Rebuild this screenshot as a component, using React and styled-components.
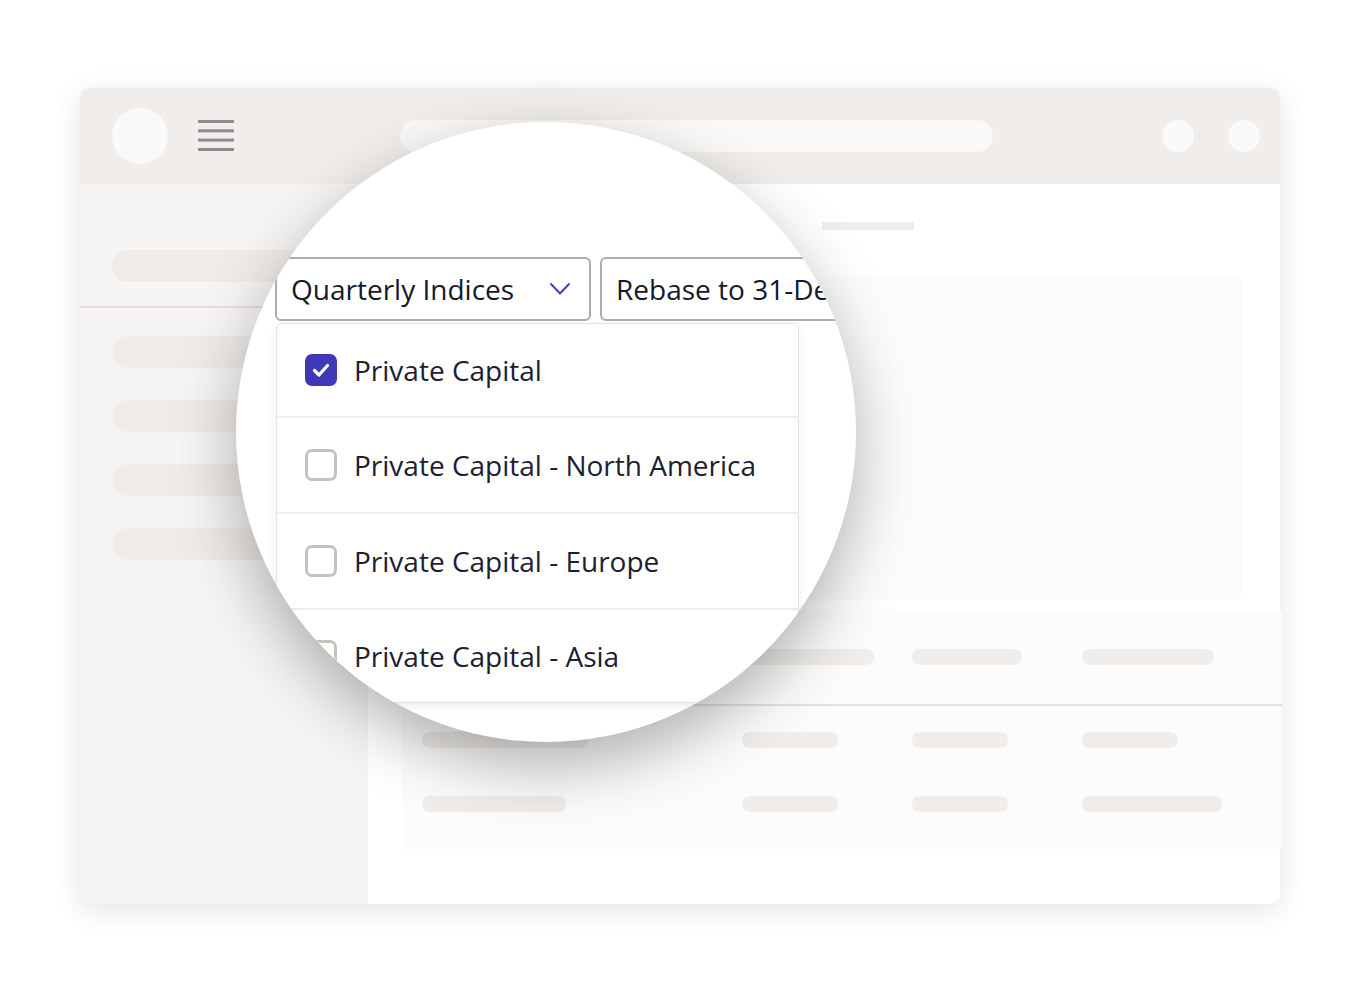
import React from "react";
import styled, { createGlobalStyle } from "styled-components";

const GlobalStyle = createGlobalStyle`
    html, body {
        margin: 0;
        padding: 0;
        background: #ffffff;
    }
    body {
        font-family: "Open Sans", "Noto Sans", sans-serif;
    }
`;

const Page = styled.div`
    width: 1360px;
    height: 992px;
    box-sizing: border-box;
    padding: 88px 80px;
`;

const Window = styled.div`
    position: relative;
    width: 1200px;
    height: 816px;
    border-radius: 10px;
    background: #ffffff;
    box-shadow: 0 6px 28px rgba(0, 0, 0, 0.11);
    display: grid;
    grid-template-rows: 96px 1fr;
    grid-template-columns: 288px 1fr;
`;

const TopBar = styled.header`
    grid-column: 1 / -1;
    display: flex;
    align-items: center;
    padding: 0 20px 0 32px;
    background: #f0edea;
    border-radius: 10px 10px 0 0;
`;

const Logo = styled.div`
    width: 56px;
    height: 56px;
    border-radius: 50%;
    background: #fafafa;
    flex-shrink: 0;
`;

const Burger = styled.svg`
    margin-left: 30px;
    flex-shrink: 0;
`;

const Search = styled.div`
    margin-left: 166px;
    width: 593px;
    height: 32px;
    border-radius: 16px;
    background: #faf9f8;
`;

const TopActions = styled.div`
    margin-left: auto;
    display: flex;
    gap: 34px;
`;

const Dot = styled.div`
    width: 32px;
    height: 32px;
    border-radius: 50%;
    background: #fafafa;
`;

const Sidebar = styled.aside`
    background: #f6f5f3;
    border-radius: 0 0 0 10px;
    display: flex;
    flex-direction: column;
`;

const SideTop = styled.div`
    padding: 66px 32px 24px;
    border-bottom: 2px solid #e4e0dc;
`;

const SideList = styled.div`
    padding: 28px 32px 0;
    display: flex;
    flex-direction: column;
    gap: 32px;
`;

const Pill = styled.div`
    width: ${(p) => p.$w}px;
    height: ${(p) => p.$h || 16}px;
    border-radius: ${(p) => (p.$h || 16) / 2}px;
    background: ${(p) => p.$bg || "#f0edea"};
`;

const Main = styled.main`
    padding: 38px 38px 0 34px;
    display: flex;
    flex-direction: column;
`;

const TitleBar = styled.div`
    margin-left: 420px;
    width: 92px;
    height: 8px;
    background: #f0edea;
`;

const ChartPanel = styled.div`
    margin-top: 46px;
    height: 324px;
    border-radius: 6px;
    background: #fcfcfc;
`;

const TablePanel = styled.div`
    margin-top: 10px;
    margin-right: -40px;
    height: 240px;
    border-radius: 6px;
    background: #fcfcfc;
`;

const TableHead = styled.div`
    height: 94px;
    border-bottom: 2px solid #e4e0dc;
    display: grid;
    grid-template-columns: 320px 170px 170px 1fr;
    align-items: center;
    padding-left: 20px;
`;

const TableBody = styled.div`
    padding: 26px 0 0 20px;
    display: flex;
    flex-direction: column;
    gap: 48px;
`;

const TableRow = styled.div`
    display: grid;
    grid-template-columns: 320px 170px 170px 1fr;
`;

const Lens = styled.div`
    position: absolute;
    left: 156px;
    top: 34px;
    width: 620px;
    height: 620px;
    box-sizing: border-box;
    padding: 135px 0 0 39px;
    border-radius: 50%;
    overflow: hidden;
    background: #ffffff;
    box-shadow: 0 24px 64px rgba(0, 0, 0, 0.3);
    z-index: 5;
`;

const Toolbar = styled.div`
    display: flex;
    gap: 9px;
`;

const Select = styled.div`
    flex-shrink: 0;
    width: ${(p) => p.$w}px;
    height: 64px;
    box-sizing: border-box;
    border: 2px solid #b1aba5;
    border-radius: 6px;
    padding: 0 18px 0 14px;
    display: flex;
    align-items: center;
    justify-content: space-between;
    font-size: 28px;
    color: #141a2c;
    white-space: nowrap;
`;

const Menu = styled.div`
    margin: 2px 0 0 1px;
    width: 523px;
    box-sizing: border-box;
    border: 1px solid #e6e2de;
    border-radius: 6px;
    background: #ffffff;
    box-shadow: 0 3px 10px rgba(0, 0, 0, 0.08);
`;

const Option = styled.div`
    box-sizing: border-box;
    height: 96px;
    padding-left: 28px;
    display: flex;
    align-items: center;
    gap: 17px;
    border-bottom: 2px solid #efebe7;
    &:first-child {
        height: 94px;
    }
    &:last-child {
        height: 92px;
        border-bottom: none;
    }
`;

const Box = styled.div`
    width: 32px;
    height: 32px;
    box-sizing: border-box;
    border-radius: 7px;
    flex-shrink: 0;
    display: flex;
    align-items: center;
    justify-content: center;
    background: ${(p) => (p.$on ? "#3e39b6" : "#ffffff")};
    border: ${(p) => (p.$on ? "none" : "3px solid #c8c2bc")};
`;

const Label = styled.span`
    font-size: 28px;
    color: #1b2033;
    white-space: nowrap;
`;

const options = [
    { label: "Private Capital", on: true },
    { label: "Private Capital - North America", on: false },
    { label: "Private Capital - Europe", on: false },
    { label: "Private Capital - Asia", on: false },
];

const App = () => {
    return (
        <>
            <GlobalStyle />
            <Page>
                <Window>
                    <TopBar>
                        <Logo />
                        <Burger width="36" height="32" viewBox="0 0 36 32">
                            <rect x="0" y="0" width="36" height="3" fill="#8d8b90" />
                            <rect x="0" y="9.3" width="36" height="3" fill="#8d8b90" />
                            <rect x="0" y="18.6" width="36" height="3" fill="#8d8b90" />
                            <rect x="0" y="28" width="36" height="3" fill="#8d8b90" />
                        </Burger>
                        <Search />
                        <TopActions>
                            <Dot />
                            <Dot />
                        </TopActions>
                    </TopBar>
                    <Sidebar>
                        <SideTop>
                            <Pill $w={224} $h={32} $bg="#efebe8" />
                        </SideTop>
                        <SideList>
                            <Pill $w={224} $h={32} $bg="#efebe8" />
                            <Pill $w={224} $h={32} $bg="#efebe8" />
                            <Pill $w={224} $h={32} $bg="#efebe8" />
                            <Pill $w={224} $h={32} $bg="#efebe8" />
                        </SideList>
                    </Sidebar>
                    <Main>
                        <TitleBar />
                        <ChartPanel />
                        <TablePanel>
                            <TableHead>
                                <Pill $w={120} />
                                <Pill $w={132} />
                                <Pill $w={110} />
                                <Pill $w={132} />
                            </TableHead>
                            <TableBody>
                                <TableRow>
                                    <Pill $w={166} />
                                    <Pill $w={96} />
                                    <Pill $w={96} />
                                    <Pill $w={96} />
                                </TableRow>
                                <TableRow>
                                    <Pill $w={144} />
                                    <Pill $w={96} />
                                    <Pill $w={96} />
                                    <Pill $w={140} />
                                </TableRow>
                            </TableBody>
                        </TablePanel>
                    </Main>
                    <Lens>
                        <Toolbar>
                            <Select $w={316}>
                                <span>Quarterly Indices</span>
                                <svg width="22" height="14" viewBox="0 0 22 14">
                                    <polyline
                                        points="2,2 11,11.5 20,2"
                                        fill="none"
                                        stroke="#4b3fbf"
                                        strokeWidth="2"
                                        strokeLinecap="round"
                                        strokeLinejoin="round"
                                    />
                                </svg>
                            </Select>
                            <Select $w={330}>
                                <span>Rebase to 31-Dec-2019</span>
                            </Select>
                        </Toolbar>
                        <Menu>
                            {options.map((o) => (
                                <Option key={o.label}>
                                    <Box $on={o.on}>
                                        {o.on && (
                                            <svg width="22" height="22" viewBox="0 0 22 22">
                                                <polyline
                                                    points="4.5,11.5 9,16 17.5,6.5"
                                                    fill="none"
                                                    stroke="#ffffff"
                                                    strokeWidth="3.2"
                                                    strokeLinecap="round"
                                                    strokeLinejoin="round"
                                                />
                                            </svg>
                                        )}
                                    </Box>
                                    <Label>{o.label}</Label>
                                </Option>
                            ))}
                        </Menu>
                    </Lens>
                </Window>
            </Page>
        </>
    );
};

export default App;
